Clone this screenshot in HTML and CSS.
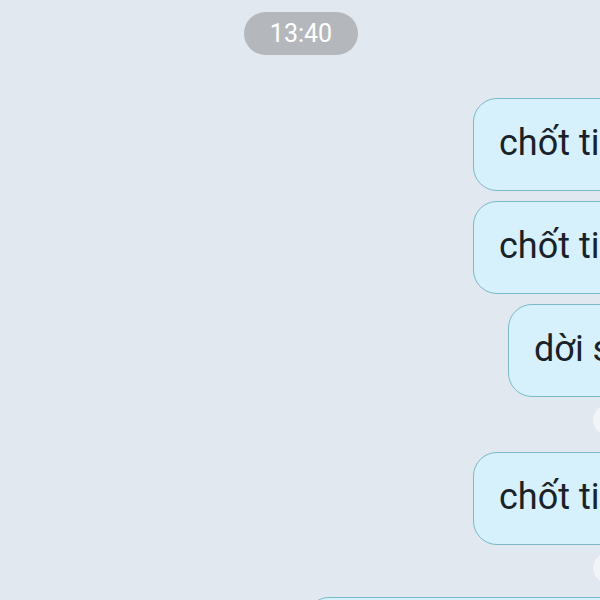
FILE: index.html
```html
<!DOCTYPE html>
<html lang="vi">
<head>
  <meta charset="UTF-8" />
  <meta name="viewport" content="width=device-width, initial-scale=1.0"/>
  <title>Chat</title>
  <link rel="stylesheet" href="styles.css">
</head>
<body>
  <div class="chat">
    <div class="time-row">
      <span class="time">13:40</span>
    </div>

    <div class="msg-row">
      <div class="bubble">chốt ti</div>
    </div>

    <div class="msg-row">
      <div class="bubble">chốt ti</div>
    </div>

    <div class="msg-row">
      <div class="bubble short">dời s</div>
      <span class="seen"></span>
    </div>

    <div class="msg-row spaced">
      <div class="bubble">chốt ti</div>
      <span class="seen"></span>
    </div>

    <div class="msg-row">
      <div class="bubble wide"></div>
    </div>
  </div>
</body>
</html>
```

FILE: styles.css
```css
html, body {
  margin: 0;
  padding: 0;
  height: 100%;
  overflow: hidden;
}

body {
  background-color: #e2e8f0;
  font-family: Roboto, 'Noto Sans', sans-serif;
}

.chat {
  display: flex;
  flex-direction: column;
  width: 600px;
  padding-top: 12px;
}

.time-row {
  display: flex;
  justify-content: center;
  margin-bottom: 43px;
  padding-left: 2px;
}

.time {
  background-color: #b4b8bd;
  color: #ffffff;
  font-size: 25px;
  line-height: 43px;
  height: 43px;
  width: 114px;
  text-align: center;
  border-radius: 22px;
}

.msg-row {
  position: relative;
  display: flex;
  margin-bottom: 10px;
}

.msg-row.spaced {
  margin-top: 45px;
}

.bubble {
  flex: none;
  margin-left: 473px;
  width: 400px;
  height: 93px;
  box-sizing: border-box;
  padding-left: 25px;
  background-color: #d6f1fb;
  border: 1.5px solid #79b9c8;
  border-radius: 24px;
  color: #1a2229;
  font-size: 36px;
  line-height: 89px;
  white-space: nowrap;
}

.bubble.short {
  margin-left: 508px;
}

.bubble.wide {
  margin-top: 42px;
  margin-left: 305px;
}

.seen {
  position: absolute;
  left: 593px;
  bottom: -38px;
  width: 30px;
  height: 30px;
  border-radius: 50%;
  background-color: rgba(255, 255, 255, 0.55);
}
```
